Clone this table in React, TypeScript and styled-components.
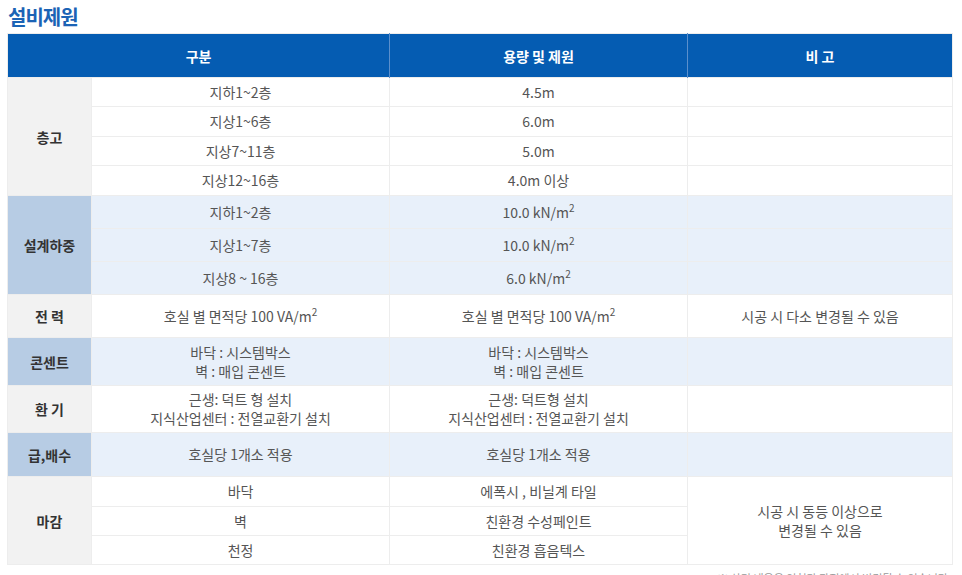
import React from "react";
import styled, { createGlobalStyle } from "styled-components";

type Tone = "gray" | "blue";

type SubRow = {
  name: React.ReactNode;
  spec: React.ReactNode;
  height: number;
};

type Group = {
  label: string;
  tone: Tone;
  rows: SubRow[];
  note?: React.ReactNode;
  mergeNote?: boolean;
};

const M2 = () => (
  <>
    m<sup>2</sup>
  </>
);

const groups: Group[] = [
  {
    label: "층고",
    tone: "gray",
    rows: [
      { name: "지하1~2층", spec: "4.5m", height: 29 },
      { name: "지상1~6층", spec: "6.0m", height: 30 },
      { name: "지상7~11층", spec: "5.0m", height: 29 },
      { name: "지상12~16층", spec: "4.0m 이상", height: 30 },
    ],
  },
  {
    label: "설계하중",
    tone: "blue",
    rows: [
      { name: "지하1~2층", spec: <>10.0 kN/<M2 /></>, height: 33 },
      { name: "지상1~7층", spec: <>10.0 kN/<M2 /></>, height: 33 },
      { name: "지상8 ~ 16층", spec: <>6.0 kN/<M2 /></>, height: 33 },
    ],
  },
  {
    label: "전 력",
    tone: "gray",
    rows: [
      {
        name: <>호실 별 면적당 100 VA/<M2 /></>,
        spec: <>호실 별 면적당 100 VA/<M2 /></>,
        height: 43,
      },
    ],
    note: "시공 시 다소 변경될 수 있음",
  },
  {
    label: "콘센트",
    tone: "blue",
    rows: [
      {
        name: <>바닥 : 시스템박스<br />벽 : 매입 콘센트</>,
        spec: <>바닥 : 시스템박스<br />벽 : 매입 콘센트</>,
        height: 48,
      },
    ],
  },
  {
    label: "환 기",
    tone: "gray",
    rows: [
      {
        name: <>근생: 덕트 형 설치<br />지식산업센터 : 전열교환기 설치</>,
        spec: <>근생: 덕트형 설치<br />지식산업센터 : 전열교환기 설치</>,
        height: 47,
      },
    ],
  },
  {
    label: "급,배수",
    tone: "blue",
    rows: [{ name: "호실당 1개소 적용", spec: "호실당 1개소 적용", height: 44 }],
  },
  {
    label: "마감",
    tone: "gray",
    mergeNote: true,
    rows: [
      { name: "바닥", spec: "에폭시 , 비닐계 타일", height: 30 },
      { name: "벽", spec: "친환경 수성페인트", height: 29 },
      { name: "천정", spec: "친환경 흡음텍스", height: 29 },
    ],
    note: <>시공 시 동등 이상으로<br />변경될 수 있음</>,
  },
];

export default function App() {
  return (
    <>
      <GlobalStyle />
      <Page>
        <Title>설비제원</Title>
        <SpecTable>
          <colgroup>
            <col style={{ width: 84 }} />
            <col style={{ width: 298 }} />
            <col style={{ width: 298 }} />
            <col />
          </colgroup>
          <thead>
            <tr>
              <HeadCell colSpan={2}>구분</HeadCell>
              <HeadCell>용량 및 제원</HeadCell>
              <HeadCell>비 고</HeadCell>
            </tr>
          </thead>
          <tbody>
            {groups.map((g) =>
              g.rows.map((r, i) => (
                <Row key={g.label + i} $h={r.height} $tone={g.tone}>
                  {i === 0 && (
                    <LabelCell rowSpan={g.rows.length} $tone={g.tone}>
                      {g.label}
                    </LabelCell>
                  )}
                  <Cell>{r.name}</Cell>
                  <Cell>{r.spec}</Cell>
                  {g.mergeNote ? (
                    i === 0 && <Cell rowSpan={g.rows.length}>{g.note}</Cell>
                  ) : (
                    <Cell>{i === 0 ? g.note : null}</Cell>
                  )}
                </Row>
              ))
            )}
          </tbody>
        </SpecTable>
        <Footnote>※ 상기 내용은 인허가 과정에서 변경될 수 있습니다.</Footnote>
      </Page>
    </>
  );
}

const GlobalStyle = createGlobalStyle`
  body {
    margin: 0;
    background: #ffffff;
    font-family: "Noto Sans CJK KR", "Noto Sans", sans-serif;
  }
`;

const Page = styled.div`
  padding: 3px 9px 0 7px;
  width: 946px;
`;

const Title = styled.h2`
  margin: 0 0 2px 1px;
  height: 28px;
  line-height: 28px;
  font-size: 20px;
  font-weight: 700;
  color: #1b63b5;
  letter-spacing: -1px;
`;

const SpecTable = styled.table`
  width: 946px;
  table-layout: fixed;
  border-collapse: collapse;
  font-size: 14px;
  color: #555555;
  border: 1px solid #ededed;
`;

const HeadCell = styled.th`
  height: 43px;
  padding: 0;
  background: #055cb2;
  color: #ffffff;
  font-size: 14px;
  font-weight: 700;
  text-align: center;
  border-left: 1px solid #5b8fcc;
  &:first-child {
    border-left: none;
  }
`;

const Row = styled.tr<{ $h: number; $tone: Tone }>`
  height: ${(p) => p.$h}px;
  background: ${(p) => (p.$tone === "blue" ? "#e8f0fa" : "#ffffff")};
`;

const Cell = styled.td`
  padding: 0 6px;
  text-align: center;
  vertical-align: middle;
  line-height: 19px;
  border: 1px solid #ededed;

  sup {
    font-size: 10px;
    line-height: 0;
    vertical-align: 6px;
  }
`;

const LabelCell = styled.td<{ $tone: Tone }>`
  padding: 0;
  text-align: center;
  vertical-align: middle;
  font-weight: 700;
  color: #333333;
  background: ${(p) => (p.$tone === "blue" ? "#b7cce4" : "#f2f2f2")};
  border: 1px solid #ededed;
`;

const Footnote = styled.p`
  margin: 5px 2px 0 0;
  text-align: right;
  font-size: 11px;
  color: #999999;
`;
